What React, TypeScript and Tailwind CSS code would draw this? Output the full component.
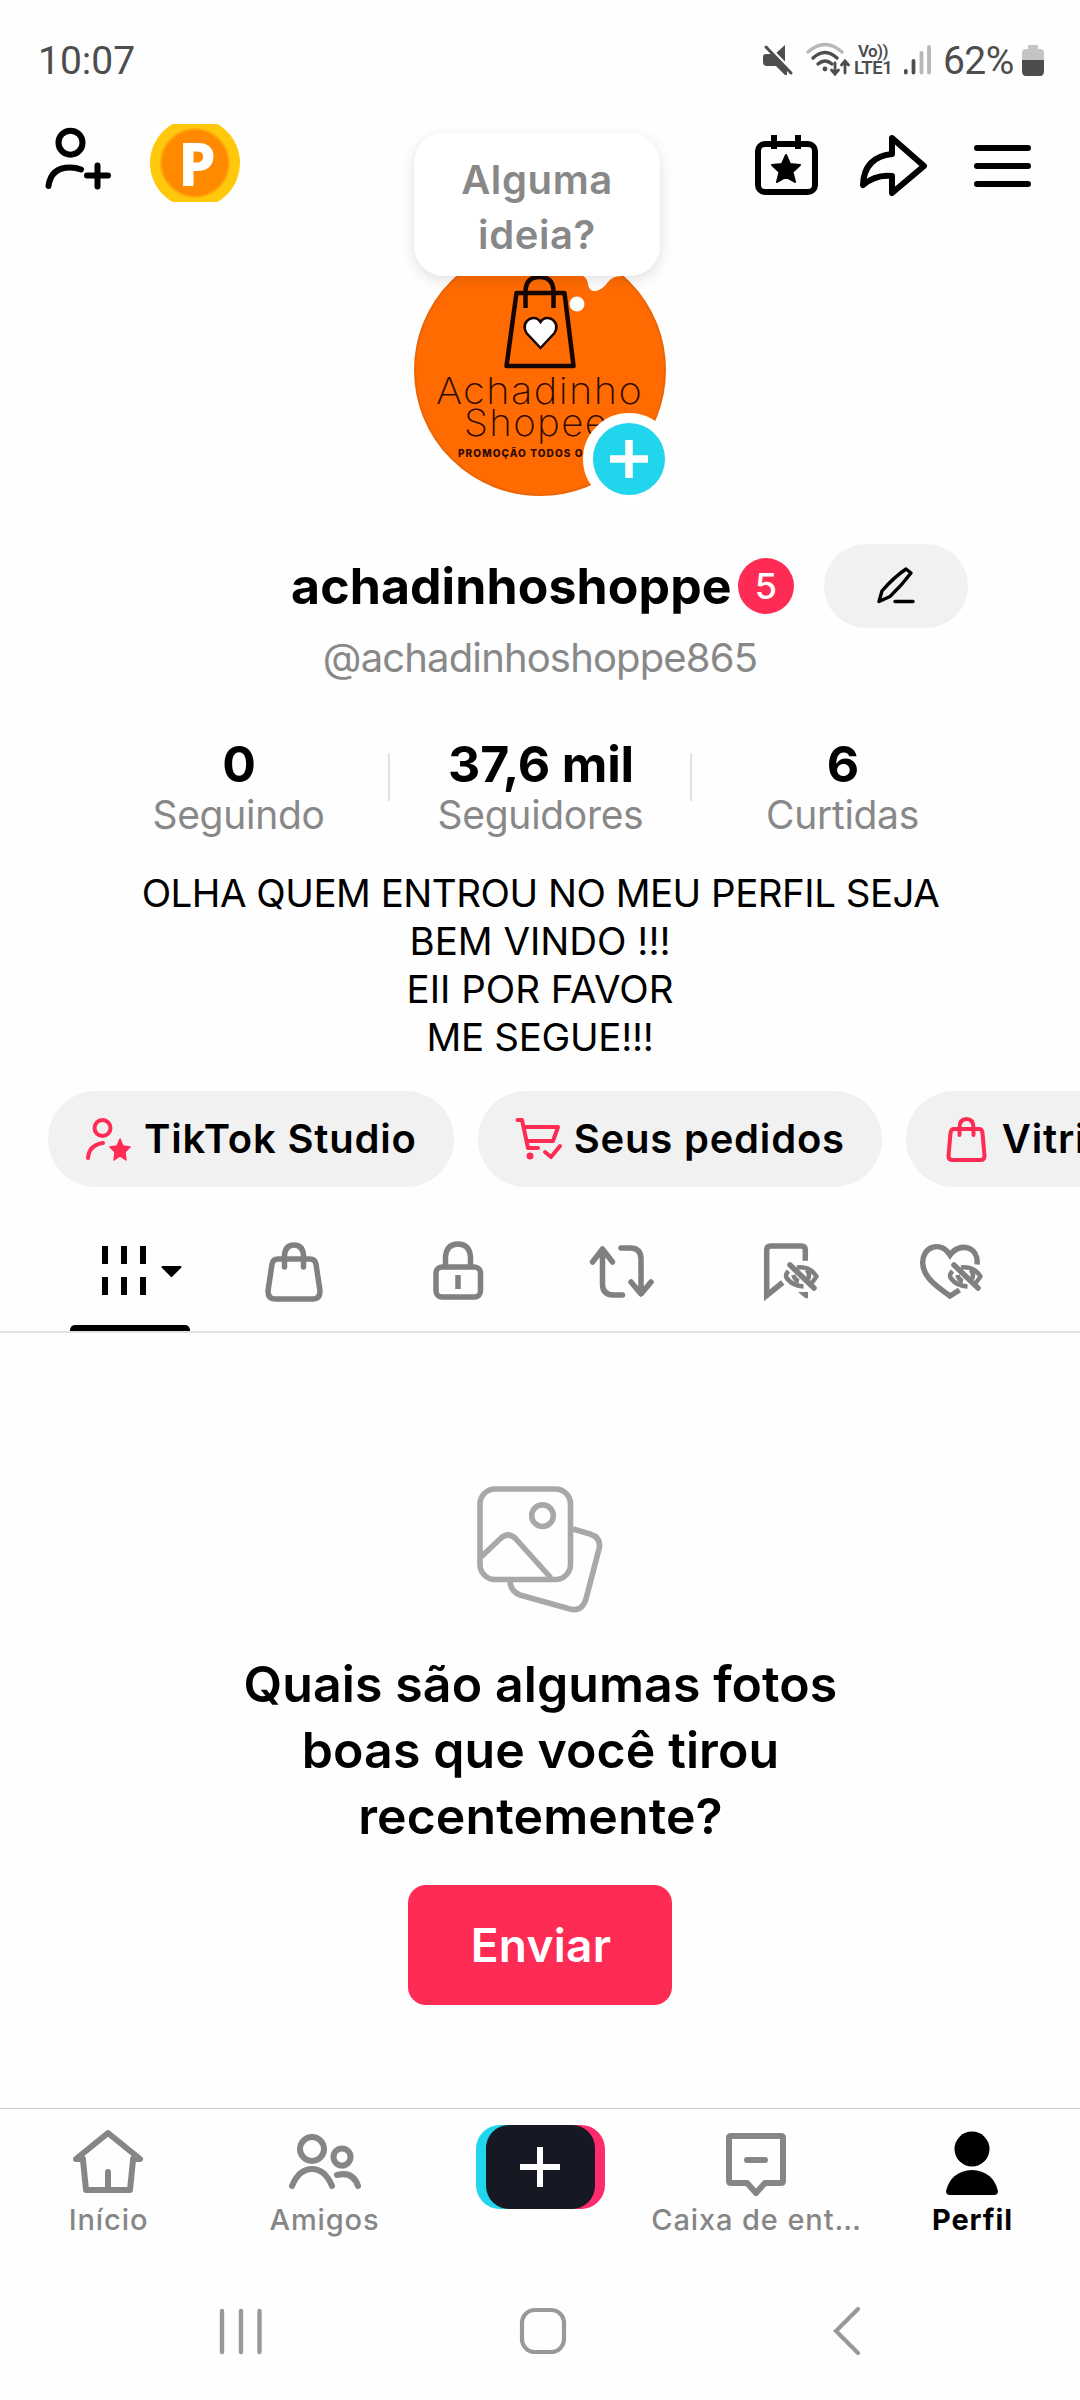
import React from 'react';
import type { ReactNode } from 'react';

const STATS = [
  { value: '0', label: 'Seguindo' },
  { value: '37,6 mil', label: 'Seguidores' },
  { value: '6', label: 'Curtidas' },
];

function StatusBar() {
  return (
    <div className="flex h-[100px] shrink-0 items-start justify-between pl-[38px] pr-[36px] pt-[37px] font-['Roboto',sans-serif] text-[39px] leading-[48px] text-[#4d4d4d]">
      <span>10:07</span>
      <div className="flex items-start">
        <svg className="mt-[6px]" width="34" height="36" viewBox="0 0 34 36" fill="#4d4d4d">
          <path d="M13 11l10-9v18z" />
          <path d="M5 5l25 26" stroke="#fefefe" strokeWidth="7" />
          <path d="M4 11h5l16 16v5h-2l-9-9H5q-4 0-4-4v-5q0-3 3-3z" />
          <path d="M4 4l25 26" stroke="#4d4d4d" strokeWidth="3" strokeLinecap="round" />
        </svg>
        <svg className="ml-[9px] mt-[5px]" width="48" height="36" viewBox="0 0 48 36" fill="none" strokeWidth="3.4" strokeLinecap="round">
          <path d="M3 10Q20-5 37 10" stroke="#b8b8b8" />
          <path d="M8 16Q20 5 32 16M13 22Q20 16 27 22" stroke="#4d4d4d" />
          <circle cx="20" cy="27" r="2.4" fill="#4d4d4d" />
          <path d="M30 21v10M26.500 28l3.500 4 3.500-4M40 31V20M36.500 23l3.500-4 3.500 4" stroke="#4d4d4d" strokeWidth="2.800" />
        </svg>
        <div className="ml-px mt-[6px] w-[41px] font-semibold leading-[17px]">
          <div className="pl-[4px] text-[17px] tracking-[-0.600px]">Vo))</div>
          <div className="text-[18.500px] tracking-[-0.500px]">LTE1</div>
        </div>
        <svg className="ml-[7px] mt-[7px]" width="30" height="32" viewBox="0 0 30 32" strokeWidth="3.800" strokeLinecap="round">
          <path d="M3.800 27v1.500M11.500 17v11.500" stroke="#4d4d4d" />
          <path d="M19.500 9v19.500M27 3v25.500" stroke="#b8b8b8" />
        </svg>
        <span className="ml-[11px] w-[76px] tracking-[-0.600px]">62%</span>
        <svg className="ml-[3px] mt-[7px]" width="22" height="32" viewBox="0 0 22 32">
          <path d="M6 1h10v4h2q4 0 4 4v7H0V9q0-4 4-4h2z" fill="#c4c4c4" />
          <path d="M0 16h22v11q0 5-4 5H4q-4 0-4-5z" fill="#4d4d4d" />
        </svg>
      </div>
    </div>
  );
}

function Avatar() {
  return (
    <div className="relative h-[252px] w-[252px]">
      <div className="relative h-[252px] w-[252px] overflow-hidden rounded-full border-2 border-[#e96505] bg-[#ff6b00] text-[#2d0a00]">
        <svg className="absolute inset-0" width="248" height="248" viewBox="2.5 2 248 248" fill="none">
          <g stroke="#160500" strokeWidth="4.500" strokeLinejoin="round">
            <path d="M103 49h48l9 73H93zM112 64V48q0-15 14-15t14 15v16" />
          </g>
          <path d="M127 104l-14-15q-5-9 3-14 7-3 11 3 4-6 11-3 8 5 3 14z" fill="#fff" stroke="#160500" strokeWidth="2.500" />
        </svg>
        <div className="absolute left-[20px] top-[127px] origin-left scale-x-[1.075] whitespace-nowrap text-[37px] font-extralight leading-[36px] tracking-[1.300px]">Achadinho</div>
        <div className="absolute left-[48px] top-[159px] origin-left scale-x-[1.040] whitespace-nowrap text-[37px] font-extralight leading-[36px] tracking-[1.300px]">Shopee</div>
        <div className="absolute left-[42px] top-[200px] whitespace-nowrap text-[10px] font-extrabold leading-[14px] tracking-[1.100px]">PROMOÇÃO TODOS OS DIAS</div>
      </div>

      {/* thought bubble */}
      <svg className="absolute left-[146px] top-[30px]" width="64" height="40" viewBox="0 0 64 40" fill="#fff">
        <path d="M0 0h64v2q-11-1-16 6-6 8-12 9-7 1-8-7-1-8-8-9H0z" />
        <circle cx="17" cy="30" r="7.500" />
      </svg>
      <div className="absolute left-0 top-[-111px] h-[143px] w-[246px] rounded-[30px] bg-white pt-[19px] text-center text-[40px] font-semibold leading-[55px] text-[#888] shadow-[0_4px_14px_rgba(0,0,0,0.12)]">
        <div className="tracking-[0.600px]">Alguma</div>
        <div className="tracking-[0.600px]">ideia?</div>
      </div>

      <div className="absolute left-[169px] top-[169px] flex h-[92px] w-[92px] items-center justify-center rounded-full border-[10px] border-white bg-[#20d5ec]">
        <svg width="38" height="38" viewBox="0 0 38 38" stroke="#fff" strokeWidth="7.500">
          <path d="M0 19h38M19 0v38" />
        </svg>
      </div>
    </div>
  );
}

function Header() {
  return (
    <div className="flex h-[444px] shrink-0 items-start">
      <div className="flex w-[414px] items-start gap-[34px] pl-[42px] pt-[24px]">
        <svg width="74" height="70" viewBox="0 0 74 70" fill="none" stroke="#000" strokeWidth="6" strokeLinecap="round">
          <circle cx="28.500" cy="18.700" r="12" />
          <path d="M6.500 62Q9 43.500 28 43.500q6 0 11 2" />
          <path d="M45 51.500h21M55.500 41.500v21" />
        </svg>
        <div className="flex h-[78px] w-[90px] items-center justify-center overflow-hidden">
          <div className="flex h-[90px] w-[90px] shrink-0 items-center justify-center rounded-full bg-[#ffc80a]">
            <div className="flex h-[70px] w-[70px] items-center justify-center rounded-full border-2 border-[#ffa90a] bg-[#ff8a00] pl-[4px] font-['Noto_Sans',sans-serif] text-[60px] font-extrabold leading-[60px] text-white">P</div>
          </div>
        </div>
      </div>
      <div className="w-[252px] pt-[144px]">
        <Avatar />
      </div>
      <div className="flex w-[414px] items-start justify-end pr-[49px] pt-[32px]">
        <svg width="68" height="68" viewBox="0 0 68 68" fill="none" stroke="#000" strokeWidth="6" strokeLinecap="round">
          <rect x="5" y="12" width="57" height="48" rx="7" />
          <path d="M21 3v14M45 3v14" strokeLinecap="butt" />
          <path d="M33 23l4 9 10 1-7.500 7 2.500 10-9-5-9 5 2.500-10-7.500-7 10-1z" fill="#000" strokeWidth="2" strokeLinejoin="round" />
        </svg>
        <svg className="ml-[35px]" width="74" height="68" viewBox="0 0 74 68" fill="none" stroke="#000" strokeWidth="6" strokeLinejoin="round">
          <path d="M36 6l32 28-32 27V44Q20 42 7 53 8 25 36 22z" />
        </svg>
        <svg className="ml-[43px] mt-[10px]" width="58" height="46" viewBox="0 0 58 46" stroke="#000" strokeWidth="6" strokeLinecap="round">
          <path d="M4 6h51M4 24h51M4 42h51" />
        </svg>
      </div>
    </div>
  );
}

function Identity() {
  return (
    <>
      <div className="flex h-[84px] shrink-0 items-center pl-[291px]">
        <h1 className="w-[447px] whitespace-nowrap text-[50px] font-bold leading-[60px] tracking-[0.100px]">achadinhoshoppe</h1>
        <span className="flex h-[56px] w-[56px] items-center justify-center rounded-full bg-[#fe2c55] text-[36px] font-medium leading-none text-white">5</span>
        <button className="ml-[30px] flex h-[84px] w-[144px] items-center justify-center rounded-full bg-[#f1f1f1]">
          <svg width="42" height="40" viewBox="1 1 42 40" fill="none" stroke="#000" strokeWidth="3.400" strokeLinejoin="round" strokeLinecap="round">
            <path d="M32 4l5 4Q28 20 16 31.500L5 36.500 8 26Q19 13 32 4zM21 36.500h18" />
          </svg>
        </button>
      </div>
      <p className="mt-[6px] h-[48px] shrink-0 whitespace-nowrap text-center text-[40px] leading-[48px] tracking-[-0.850px] text-[#888]">@achadinhoshoppe865</p>
    </>
  );
}

function Stats() {
  return (
    <div className="mt-[57px] flex h-[101px] shrink-0 pl-[88px]">
      {STATS.map((s, i) => (
        <React.Fragment key={s.label}>
          {i > 0 && <div className="mt-[14px] h-[48px] w-[2px] bg-[#e1e1e1]" />}
          <div className="w-[300px] whitespace-nowrap text-center">
            <div className="pl-[2px] text-[50px] font-bold leading-[50px] tracking-[-0.200px]">{s.value}</div>
            <div className="pl-px pt-px text-[39px] leading-[50px] tracking-[-0.300px] text-[#888]">{s.label}</div>
          </div>
        </React.Fragment>
      ))}
    </div>
  );
}

function Bio() {
  return (
    <div className="mt-[29px] h-[192px] shrink-0 whitespace-nowrap text-center text-[38.500px] leading-[48px]">
      <p className="pl-px tracking-[-0.500px]">OLHA QUEM ENTROU NO MEU PERFIL SEJA</p>
      <p>BEM VINDO !!!</p>
      <p>EII POR FAVOR</p>
      <p className="tracking-[-0.300px]">ME SEGUE!!!</p>
    </div>
  );
}

function Chip({ icon, children }: { icon: ReactNode; children: ReactNode }) {
  return (
    <button className="flex h-[96px] shrink-0 items-center gap-[10px] rounded-full bg-[#f1f1f1] pl-[36px] pr-[37px] text-[40px] font-semibold leading-[48px]">
      {icon}
      <span className="whitespace-nowrap tracking-[0.800px]">{children}</span>
    </button>
  );
}

function Shortcuts() {
  return (
    <div className="mt-[30px] flex shrink-0 gap-[24px] overflow-hidden pl-[48px]">
      <Chip
        icon={
          <svg width="50" height="48" viewBox="0 0 50 48" fill="none" stroke="#fe2c55" strokeWidth="4" strokeLinecap="round">
            <circle cx="18.500" cy="13" r="8" />
            <path d="M4 43Q5 30 19 28" />
            <path d="M36 24l3 7 7 1-5 5 1 8-6-4-6 4 1-8-5-5 7-1z" fill="#fe2c55" strokeWidth="1.500" strokeLinejoin="round" />
          </svg>
        }
      >
        TikTok Studio
      </Chip>
      <Chip
        icon={
          <svg width="50" height="48" viewBox="0 0 50 48" fill="none" stroke="#fe2c55" strokeWidth="4" strokeLinecap="round" strokeLinejoin="round">
            <path d="M3.500 5H8l6 28h10M10 12h34l-5 14H13M31 37l6 5 9-11" />
            <circle cx="16" cy="41" r="3.500" fill="#fe2c55" stroke="none" />
          </svg>
        }
      >
        Seus pedidos
      </Chip>
      <Chip
        icon={
          <svg width="50" height="48" viewBox="0 0 50 48" fill="none" stroke="#fe2c55" strokeWidth="4" strokeLinecap="round" strokeLinejoin="round">
            <path d="M12 14h25q3 0 3.500 4l2 23q0 4-4 4h-28q-4 0-4-4l2-23q.5-4 3.500-4zM17.500 20v-7q0-9 7-9t7 9v7" />
          </svg>
        }
      >
        Vitrine
      </Chip>
    </div>
  );
}

const HiddenEye = () => (
  <g fill="none" stroke="#808080" strokeWidth="4.500">
    <path d="M30 25l24 23" strokeWidth="5.500" strokeLinecap="round" />
    <path d="M37 27.500Q50 26 56.500 36.500L51 44M46.500 30q4 4 1.500 9M28.500 31q-4 4-1.500 7.500Q33 46 43.500 46.500M33.500 35q1 5 5.500 6" strokeLinejoin="round" />
  </g>
);

function Tabs() {
  return (
    <div className="flex h-[146px] shrink-0 items-stretch border-b-2 border-[#e1e1e1] pl-[48px]">
      <div className="relative flex w-[164px] justify-center pt-[52px]">
        <svg className="overflow-visible" width="90" height="64" viewBox="0 0 90 64" fill="#000">
          <path d="M20 10v12M39 10v12M58 10v12M20 41v12M39 41v12M58 41v12" stroke="#000" strokeWidth="6" strokeLinecap="square" />
          <path d="M77.500 28h18L86.500 37z" stroke="#000" strokeWidth="2" strokeLinejoin="round" />
        </svg>
        <div className="absolute bottom-0 left-[22px] h-[6px] w-[120px] rounded-t-[5px] bg-black" />
      </div>
      <div className="flex w-[164px] justify-center pt-[52px]">
        <svg width="64" height="68" viewBox="0 0 64 68" fill="none" stroke="#808080" strokeWidth="5.500" strokeLinecap="round">
          <path d="M16 20h32q5 0 6 5l4 27q0 8-7 8H13q-7 0-7-8l4-27q1-5 6-5zM22.500 28V16q1-10 9.500-10t9.500 10v12" />
        </svg>
      </div>
      <div className="flex w-[164px] justify-center pt-[50px]">
        <svg width="60" height="68" viewBox="0 0 60 68" fill="none" stroke="#808080" strokeWidth="5.500">
          <rect x="8" y="30" width="44.500" height="30" rx="6" />
          <path d="M17.500 30V20q1-13 12.500-13t12.500 13v10M30 38v14" />
        </svg>
      </div>
      <div className="flex w-[164px] justify-center pt-[52px]">
        <svg width="72" height="68" viewBox="0 0 72 68" fill="none" stroke="#808080" strokeWidth="5.500" strokeLinecap="round" strokeLinejoin="round">
          <path d="M6.500 23L16.500 10l10 13M16.500 11v34q0 11 11 11h9M35 9h9q11 0 11 11v34M45 43l10 12 10-12" />
        </svg>
      </div>
      <div className="flex w-[164px] justify-center pl-[12px] pt-[53px]">
        <svg width="64" height="64" viewBox="0 0 64 64">
          <path d="M45.300 20.700V10q0-4-4-4H10.700q-4 0-4 4v45.500l16-13" fill="none" stroke="#808080" strokeWidth="5.500" />
          <path d="M38 52h10v6q-2 1-4-1z" fill="#808080" />
          <HiddenEye />
        </svg>
      </div>
      <div className="flex w-[164px] justify-center pl-[4px] pt-[53px]">
        <svg width="72" height="64" viewBox="0 0 72 64">
          <path d="M61 24.500C63 6 43 2 34 15 24 0 6 7 6.700 23 7 38 23 48 34 56l9.500-6" fill="none" stroke="#808080" strokeWidth="5.500" />
          <g transform="translate(8 0)">
            <HiddenEye />
          </g>
        </svg>
      </div>
    </div>
  );
}

function EmptyState() {
  return (
    <div className="flex h-[775px] shrink-0 flex-col items-center pt-[150px]">
      <svg width="132" height="134" viewBox="0 0 132 134" fill="none" stroke="#a8a8a8" strokeWidth="5.600">
        <path d="M99 46l17 5q12 4 9 15l-13 50q-4 13-16 10l-50-14q-10-4-10-15" />
        <rect x="6" y="6" width="90.500" height="90.500" rx="15" />
        <circle cx="68.500" cy="32.700" r="10.800" />
        <path d="M7 74l20-19q7-6 14 0l36 40" />
      </svg>
      <h2 className="mt-[34px] whitespace-nowrap pl-px text-center text-[50px] font-semibold leading-[66px] tracking-[0.100px]">
        Quais são algumas fotos
        <br />
        boas que você tirou
        <br />
        recentemente?
      </h2>
      <button className="mt-[36px] flex h-[120px] w-[264px] shrink-0 items-center justify-center rounded-[18px] bg-[#fe2c55] pl-[2px] text-[46px] font-semibold tracking-[0.300px] text-white">
        Enviar
      </button>
    </div>
  );
}

function NavItem({ icon, label, active }: { icon: ReactNode; label: string; active?: boolean }) {
  return (
    <div className={`flex w-[216px] flex-col items-center pt-[16px] ${active ? 'font-bold text-black' : 'font-medium text-[#868686]'}`}>
      <div className="h-[78px]">{icon}</div>
      <span className="whitespace-nowrap pl-px text-[29px] leading-[34px] tracking-[0.900px]">{label}</span>
    </div>
  );
}

function BottomNav() {
  return (
    <div className="flex h-[172px] shrink-0 border-t border-[#ccc]">
      <NavItem
        label="Início"
        icon={
          <svg width="76" height="76" viewBox="0 0 76 76" fill="none" stroke="#868686" strokeWidth="6" strokeLinecap="round" strokeLinejoin="round">
            <path d="M13 34H6L38 8l32 26h-7M13 35l3 30h44l3-30M38 47v17" />
          </svg>
        }
      />
      <NavItem
        label="Amigos"
        icon={
          <svg width="76" height="76" viewBox="0 0 76 76" fill="none" stroke="#868686" strokeWidth="6" strokeLinecap="round">
            <circle cx="26" cy="24" r="12" />
            <circle cx="56" cy="32" r="8.500" />
            <path d="M6 61q7-17 20-17t20 17M51 50q16-4 21 11" />
          </svg>
        }
      />
      <div className="flex w-[216px] justify-center pt-[16px]">
        <div className="flex h-[84px] w-[129px] justify-center rounded-[24px] bg-[linear-gradient(90deg,#20d5ec_50%,#fe2c6d_50%)]">
          <div className="flex h-[84px] w-[109px] items-center justify-center rounded-[23px] bg-[#161823]">
            <svg width="40" height="40" viewBox="0 0 40 40" stroke="#fff" strokeWidth="6">
              <path d="M0 20h40M20 0v40" />
            </svg>
          </div>
        </div>
      </div>
      <NavItem
        label="Caixa de ent…"
        icon={
          <svg width="76" height="76" viewBox="0 0 76 76" fill="none" stroke="#868686" strokeWidth="6" strokeLinejoin="round" strokeLinecap="round">
            <path d="M13 11h50q2 0 2 2v43q0 2-2 2H47l-9 10-9-10H13q-2 0-2-2V13q0-2 2-2zM29 35h18" />
          </svg>
        }
      />
      <NavItem
        active
        label="Perfil"
        icon={
          <svg width="76" height="76" viewBox="0 0 76 76" fill="#000">
            <circle cx="38" cy="24" r="17.500" />
            <path d="M12 66q5-20 26-21 21 1 26 21 0 4-4 4H16q-4 0-4-4z" />
          </svg>
        }
      />
    </div>
  );
}

function SystemNav() {
  return (
    <div className="flex h-[120px] shrink-0 items-start pt-[24px]">
      <svg className="ml-[216px]" width="50" height="54" viewBox="0 0 50 54" stroke="#999" strokeWidth="4.400" strokeLinecap="round">
        <path d="M6 7v41M25 7v41M43.500 7v41" />
      </svg>
      <svg className="ml-[250px]" width="54" height="54" viewBox="0 0 54 54" fill="none" stroke="#999" strokeWidth="4.200">
        <rect x="6" y="6" width="42" height="42" rx="13" />
      </svg>
      <svg className="ml-[260px]" width="34" height="54" viewBox="0 0 34 54" fill="none" stroke="#999" strokeWidth="4.200" strokeLinecap="round">
        <path d="M28 5L6 27l22 22" />
      </svg>
    </div>
  );
}

export default function App() {
  return (
    <div className="flex h-[2400px] w-[1080px] flex-col overflow-hidden bg-[#fefefe] font-['Inter',sans-serif] text-black">
      <StatusBar />
      <Header />
      <Identity />
      <Stats />
      <Bio />
      <Shortcuts />
      <Tabs />
      <EmptyState />
      <BottomNav />
      <SystemNav />
    </div>
  );
}
